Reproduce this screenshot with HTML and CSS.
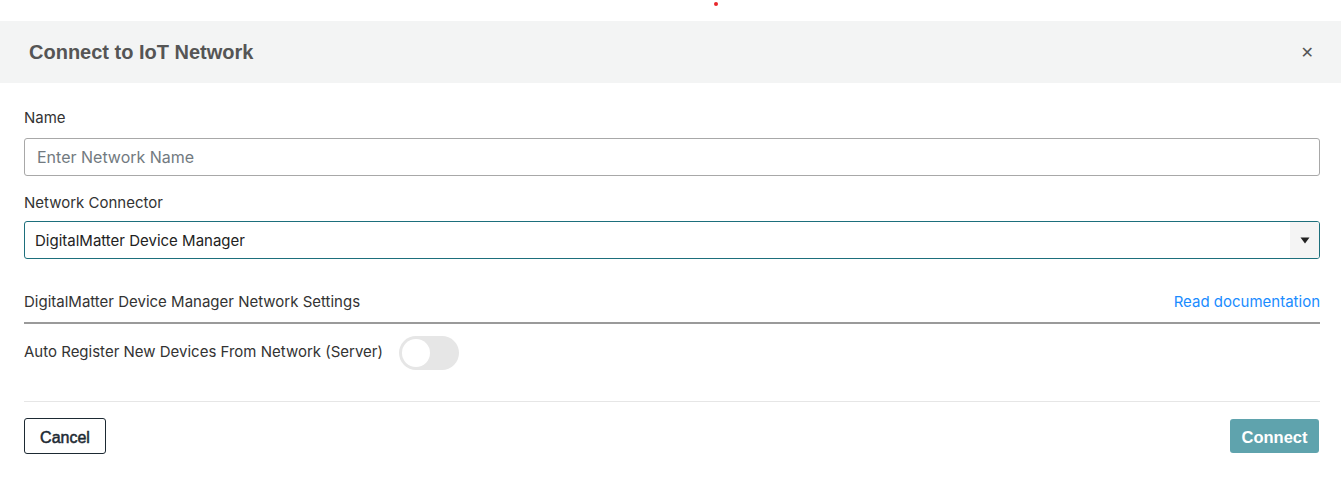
FILE: index.html
```html
<!DOCTYPE html>
<html>
<head>
<meta charset="utf-8">
<link rel="stylesheet" href="styles.css">
</head>
<body>
<div class="page">
  <div class="topbar"><span class="dot"></span></div>
  <div class="modal">
    <div class="modal-header">
      <h2 class="title">Connect to IoT Network</h2>
      <span class="close">&#x2715;</span>
    </div>
    <div class="modal-body">
      <div class="field">
        <label class="label">Name</label>
        <div class="input placeholder">Enter Network Name</div>
      </div>
      <div class="field">
        <label class="label label-tight">Network Connector</label>
        <div class="select">
          <span class="select-value">DigitalMatter Device Manager</span>
          <span class="select-arrow"><svg width="10" height="7" viewBox="0 0 10 7"><path d="M0.5 0.5 L9.5 0.5 L5 6.5 Z" fill="#222"/></svg></span>
        </div>
      </div>
      <div class="section-head">
        <span class="section-title">DigitalMatter Device Manager Network Settings</span>
        <a class="doc-link">Read documentation</a>
      </div>
      <div class="toggle-row">
        <span class="toggle-label">Auto Register New Devices From Network (Server)</span>
        <span class="toggle"><span class="knob"></span></span>
      </div>
    </div>
    <div class="modal-footer">
      <button class="btn btn-cancel">Cancel</button>
      <button class="btn btn-connect">Connect</button>
    </div>
  </div>
</div>
</body>
</html>
```

FILE: styles.css
```css
* { box-sizing: border-box; }
html, body { margin: 0; padding: 0; background: #fff; }
body { font-family: Inter, "Noto Sans", sans-serif; color: #333; }

.page { width: 1341px; height: 483px; overflow: hidden; }

.topbar { height: 21px; position: relative; }
.dot {
  position: absolute; left: 714px; top: 2px;
  width: 4px; height: 4px; border-radius: 50%; background: #e8262b;
}

.modal-header {
  height: 62px;
  background: #f3f4f4;
  display: flex; align-items: center; justify-content: space-between;
  padding: 0 27px 0 29px;
}
.title {
  margin: 0;
  font-family: "Liberation Sans", Arial, sans-serif;
  font-weight: bold; font-size: 20px; color: #555;
}
.close {
  font-family: "DejaVu Sans", sans-serif;
  font-weight: bold; font-size: 16px; color: #555;
  margin-top: 1px;
}

.modal-body {
  padding: 26px 21px 0 24px;
  display: flex; flex-direction: column;
}
.field { display: flex; flex-direction: column; }
.label { font-size: 15px; color: #333; line-height: 18px; margin-bottom: 11px; }
.label-tight { margin-bottom: 9px; }
.input {
  height: 38px; border: 1px solid #a8a8a8; border-radius: 3px;
  display: flex; align-items: center; padding-left: 12px;
  font-size: 16px; color: #727a80;
  margin-bottom: 18px;
}
.select {
  height: 38px; border: 1px solid #1d6f7c; border-radius: 3px;
  display: flex; align-items: stretch; justify-content: space-between;
  overflow: hidden;
}
.select-value {
  display: flex; align-items: center; padding-left: 10px;
  font-size: 15px; color: #222;
}
.select-arrow {
  width: 29px; background: #f4f4f4;
  display: flex; align-items: center; justify-content: center;
}

.section-head {
  margin-top: 34px;
  display: flex; justify-content: space-between; align-items: center;
  padding-bottom: 11px;
  border-bottom: 2px solid #9a9a9a;
  font-size: 15px; line-height: 18px;
}
.section-title { color: #333; }
.doc-link { color: #1a8cff; font-size: 15px; }

.toggle-row {
  display: flex; align-items: center; gap: 16px;
  margin-top: 12px;
  padding-bottom: 31px;
  border-bottom: 1px solid #e6e6e6;
}
.toggle-label { font-size: 15px; color: #333; margin-top: -3px; }
.toggle {
  width: 60px; height: 34px; border-radius: 17px; background: #e6e6e6;
  display: flex; align-items: center; padding-left: 3px;
}
.knob { width: 28px; height: 28px; border-radius: 50%; background: #fff; }

.modal-footer {
  padding: 16px 22px 0 24px;
  display: flex; justify-content: space-between; align-items: flex-start;
}
.btn {
  font-family: "Liberation Sans", Arial, sans-serif;
  font-size: 16px; border-radius: 3px; cursor: pointer;
  padding: 3px 0 0 0;
}
.btn-cancel {
  height: 36px; width: 82px;
  background: #fff; border: 1px solid #1d2a33; color: #1d2a33;
  font-weight: 500;
  -webkit-text-stroke: 0.5px #1d2a33;
}
.btn-connect {
  height: 34px; width: 89px; margin-top: 1px;
  background: #5fa3ad; border: none; color: #fff; font-weight: bold;
  font-size: 16.5px;
}
```
